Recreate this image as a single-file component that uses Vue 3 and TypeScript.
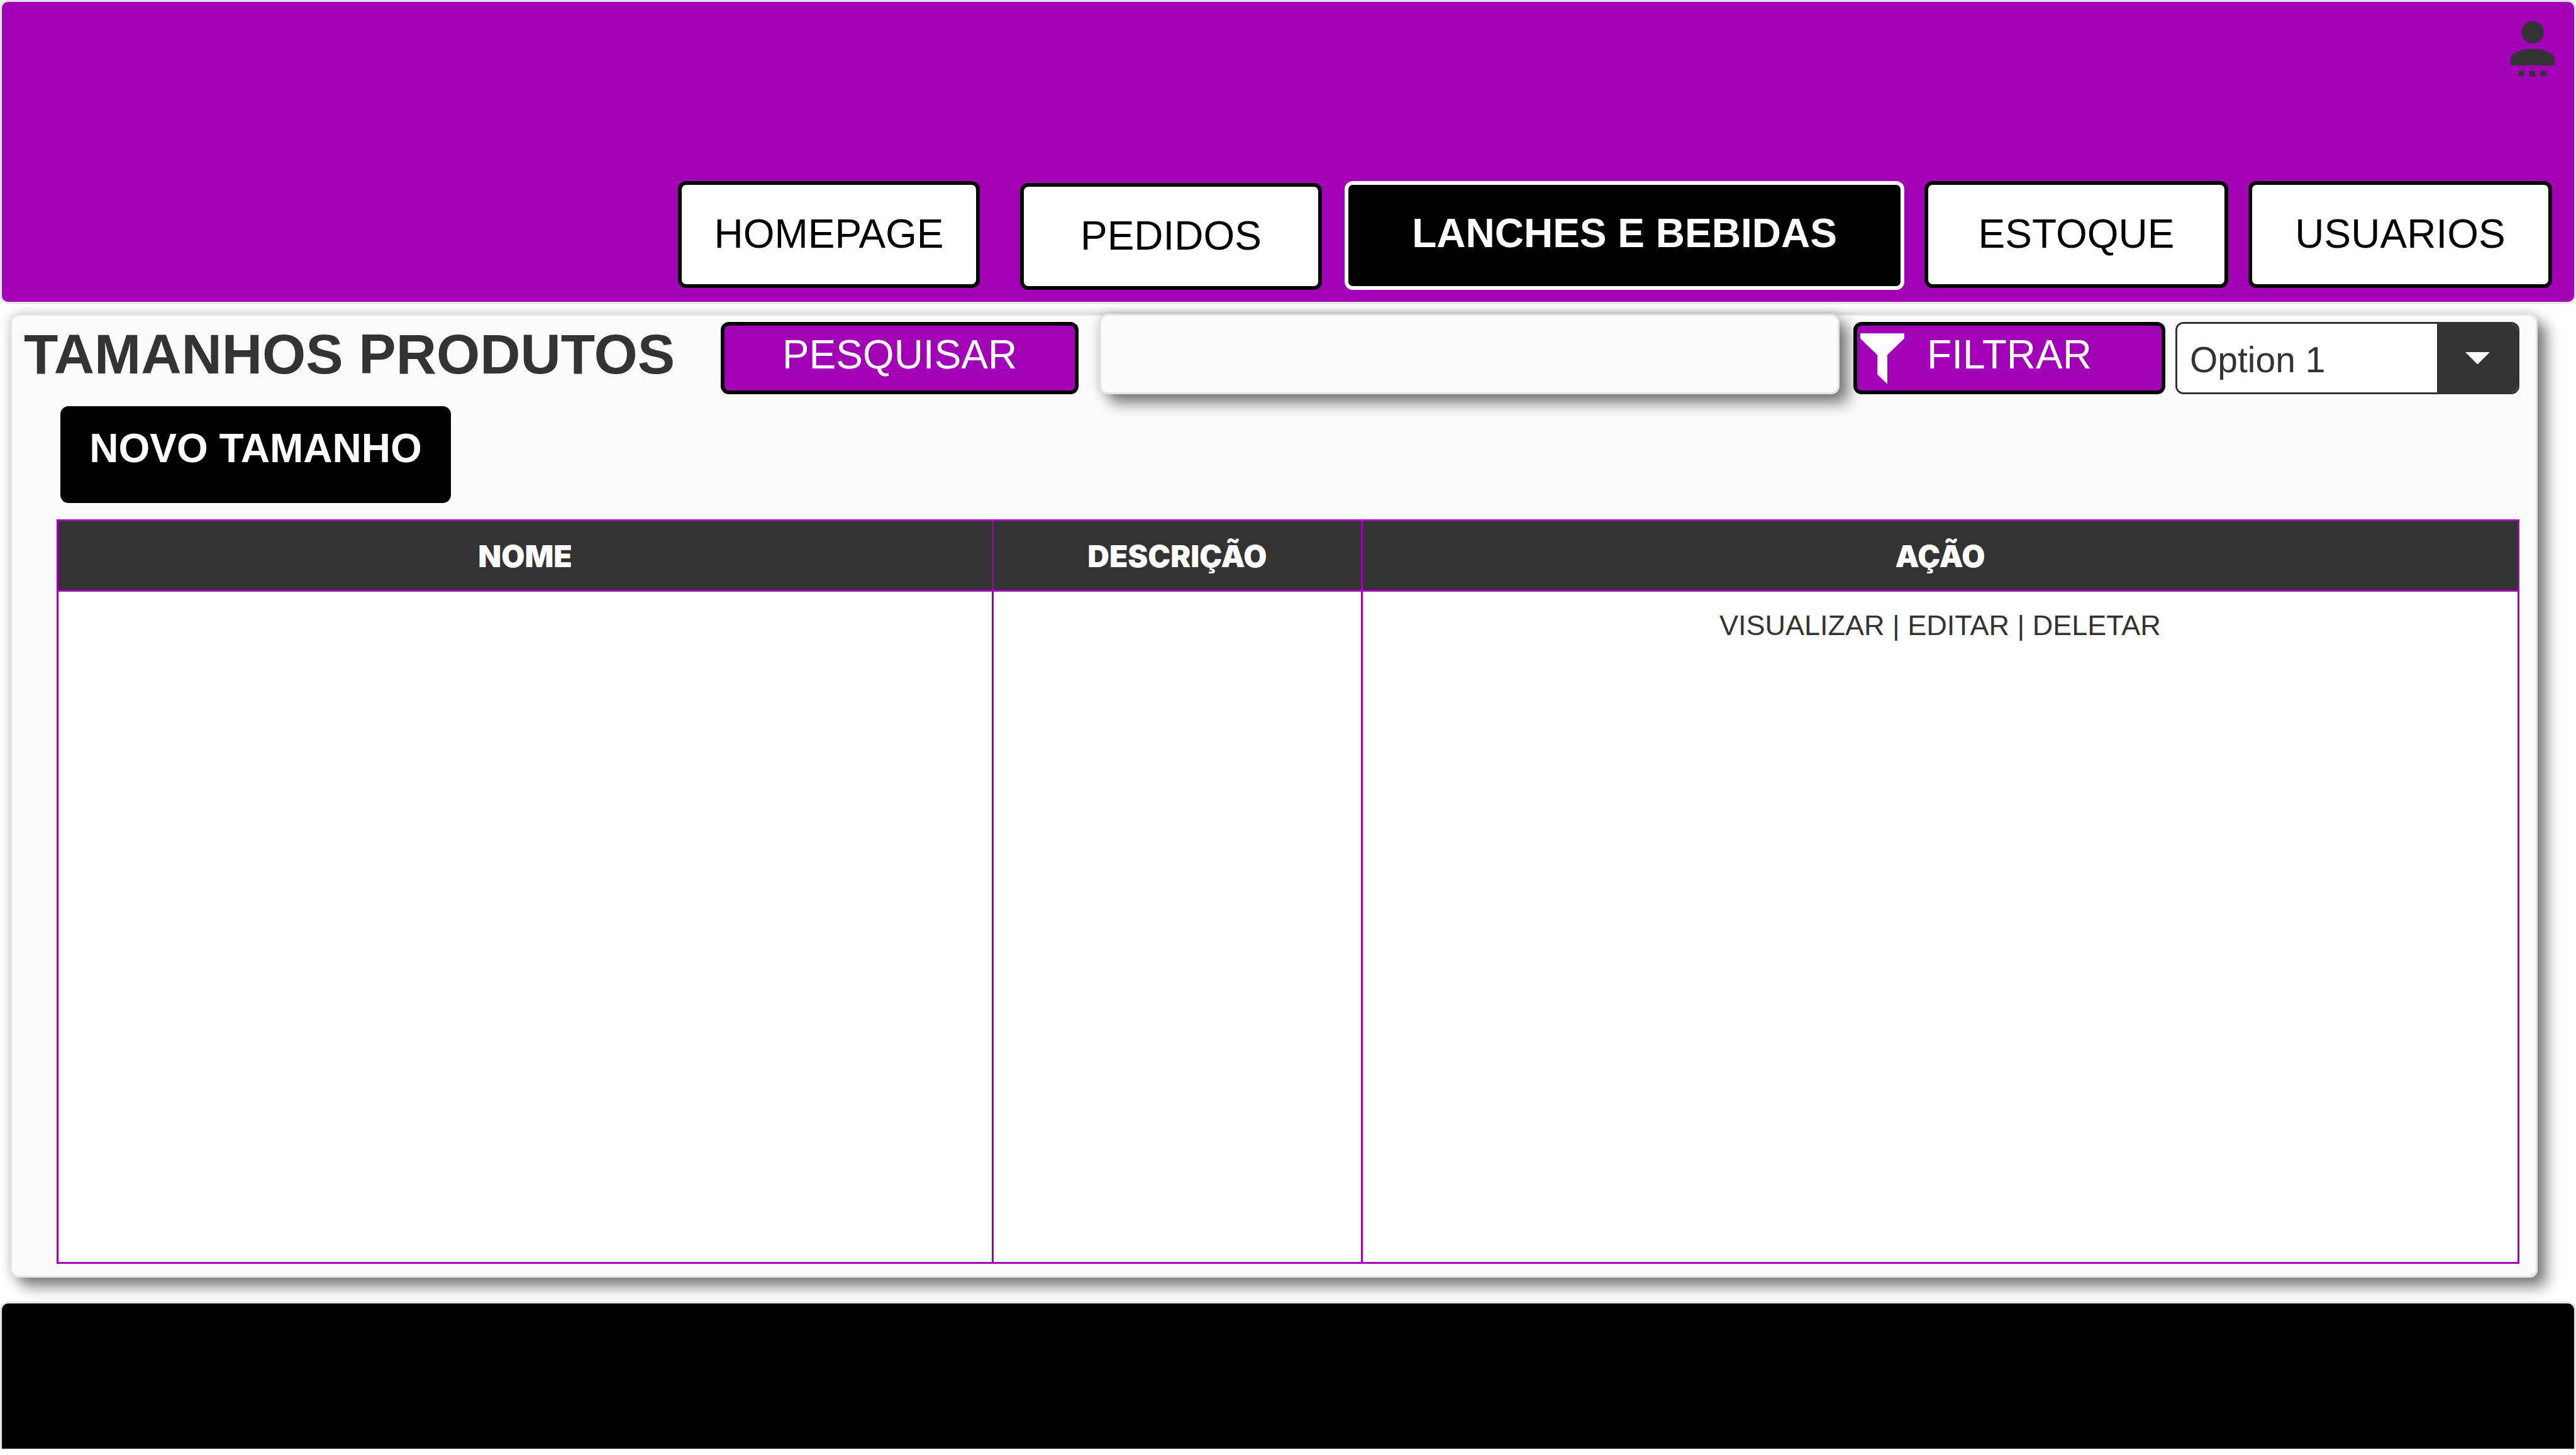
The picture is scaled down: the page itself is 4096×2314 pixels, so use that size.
<script setup lang="ts">
import { ref } from 'vue'

interface NavItem {
  label: string
  kind?: string
}

const navItems: NavItem[] = [
  { label: 'HOMEPAGE' },
  { label: 'PEDIDOS', kind: 'orders' },
  { label: 'LANCHES E BEBIDAS', kind: 'active' },
  { label: 'ESTOQUE', kind: 'wide' },
  { label: 'USUARIOS', kind: 'wide' },
]

const actions: string[] = ['VISUALIZAR', 'EDITAR', 'DELETAR']
const search = ref('')
const filter = ref('Option 1')
</script>

<template>
  <div class="page">
    <header class="header">
      <button class="account" type="button" aria-label="Conta">
        <svg viewBox="0 0 88 112" aria-hidden="true">
          <circle cx="44" cy="22" r="22" />
          <path d="M0 88V78C0 64 20 55 44 55S88 64 88 78V88Z" />
          <path d="M16 99h11v11H16zM38 99h11v11H38zM60 99h11v11H60z" />
        </svg>
      </button>
      <nav class="nav">
        <button
          v-for="item in navItems"
          :key="item.label"
          type="button"
          class="nav-item"
          :class="item.kind"
        >
          {{ item.label }}
        </button>
      </nav>
    </header>

    <main class="panel">
      <div class="toolbar">
        <h1 class="title">TAMANHOS PRODUTOS</h1>
        <button class="tool search-button" type="button">PESQUISAR</button>
        <input v-model="search" class="search" type="text" aria-label="Pesquisar" />
        <button class="tool filter-button" type="button">
          <svg class="funnel" viewBox="0 0 88 101" aria-hidden="true">
            <path d="M0 0H88V10L54 43V101L34 82V43L0 10Z" />
          </svg>
          FILTRAR
        </button>
        <div class="select-box">
          <select v-model="filter" class="select" aria-label="Filtro">
            <option>Option 1</option>
          </select>
          <span class="arrow" aria-hidden="true">
            <svg viewBox="0 0 48 24"><path d="M0 0H48L24 24Z" /></svg>
          </span>
        </div>
      </div>

      <button class="new-button" type="button">NOVO TAMANHO</button>

      <table class="table">
        <thead>
          <tr>
            <th class="col-name" scope="col">NOME</th>
            <th class="col-description" scope="col">DESCRIÇÃO</th>
            <th scope="col">AÇÃO</th>
          </tr>
        </thead>
        <tbody>
          <tr>
            <td></td>
            <td></td>
            <td>
              <template v-for="(action, i) in actions" :key="action">
                <template v-if="i > 0">{{ ' | ' }}</template>
                <a href="#">{{ action }}</a>
              </template>
            </td>
          </tr>
        </tbody>
      </table>
    </main>

    <footer class="footer"></footer>
  </div>
</template>

<style>
body {
  margin: 0;
  background: #fff;
}
</style>

<style scoped>
.page {
  box-sizing: border-box;
  min-height: 100vh;
  padding-bottom: 10px;
  display: flex;
  flex-direction: column;
  font-family: 'Liberation Sans', Arial, sans-serif;
  color: #333;
}

.page * {
  box-sizing: border-box;
}

button,
input,
select {
  margin: 0;
  font-family: inherit;
}

.header {
  display: flex;
  flex-direction: column;
  justify-content: space-between;
  align-items: flex-end;
  height: 483px;
  padding: 31px 35px 19px 0;
  border: 3px solid #e4e4e4;
  border-radius: 13px;
  background: #a100b7;
}

.account {
  width: 70px;
  height: 90px;
  margin-right: -4px;
  padding: 0;
  border: 0;
  background: none;
}

.account svg {
  display: block;
  width: 100%;
  fill: #333;
}

.nav {
  display: flex;
  align-items: flex-start;
  gap: 32px;
}

.nav-item {
  width: 480px;
  height: 170px;
  padding: 0 0 2px;
  border: 6px solid #000;
  border-radius: 13px;
  background: #fff;
  color: #000;
  font-size: 64px;
  white-space: nowrap;
}

.nav-item.orders {
  align-self: flex-end;
  margin: 0 4px 0 32px;
}

.nav-item.active {
  width: 890px;
  height: 173px;
  padding-bottom: 8px;
  border-color: #fff;
  background: #000;
  color: #fff;
  font-weight: 700;
}

.nav-item.wide {
  width: 483px;
}

.panel {
  flex: 1;
  margin: 16px 61px 38px 16px;
  padding-bottom: 22px;
  border-radius: 13px;
  background: #fbfbfb;
  box-shadow:
    inset 0 0 0 3px #e4e4e4,
    15px 15px 22px rgba(0, 0, 0, 0.47),
    0 0 18px rgba(0, 0, 0, 0.2);
}

.toolbar {
  display: flex;
  align-items: flex-end;
  height: 128px;
  padding: 0 29px 0 22px;
}

.title {
  width: 1108px;
  margin: 0;
  font-size: 89px;
  line-height: 128px;
  white-space: nowrap;
}

.tool {
  height: 115px;
  padding: 0 0 12px;
  border: 6px solid #000;
  border-radius: 13px;
  background: #a100b7;
  color: #fff;
  font-size: 64px;
}

.search-button {
  width: 569px;
}

.search {
  flex: 1;
  min-width: 0;
  height: 128px;
  margin: 0 22px 0 33px;
  padding: 0 24px;
  border: 3px solid #e4e4e4;
  border-radius: 13px;
  background: #fbfbfb;
  box-shadow:
    15px 15px 22px rgba(0, 0, 0, 0.47),
    0 0 18px rgba(0, 0, 0, 0.2);
  color: #333;
  font-size: 57px;
}

.filter-button {
  position: relative;
  width: 496px;
}

.funnel {
  position: absolute;
  top: 12px;
  left: 5px;
  width: 70px;
  height: 81px;
  fill: #fff;
}

.select-box {
  display: flex;
  width: 547px;
  height: 115px;
  margin-left: 16px;
  overflow: hidden;
  border: 3px solid #333;
  border-radius: 13px;
  background: #fff;
}

.select {
  flex: 1;
  min-width: 0;
  padding: 4px 0 0 20px;
  border: 0;
  appearance: none;
  background: #fff;
  color: #333;
  font-size: 57px;
}

.arrow {
  display: flex;
  align-items: center;
  justify-content: center;
  width: 128px;
  background: #333;
}

.arrow svg {
  width: 39px;
  fill: #fff;
}

.new-button {
  display: block;
  width: 621px;
  height: 154px;
  margin: 19px 0 26px 80px;
  padding: 0 0 20px;
  border: 0;
  border-radius: 13px;
  background: #000;
  color: #fff;
  font-size: 64px;
  font-weight: 700;
}

.table {
  width: calc(100% - 103px);
  height: calc(100vh - 1130px);
  margin-left: 74px;
  border-collapse: collapse;
  table-layout: fixed;
  background: #fff;
}

.col-name {
  width: 38%;
}

.col-description {
  width: 15%;
}

th,
td {
  border: 3px solid #a100b7;
  text-align: center;
}

th {
  height: 112px;
  padding: 2px 0 0;
  background: #333;
  color: #fff;
  font-family: Inter, 'Liberation Sans', sans-serif;
  font-size: 48px;
  font-weight: 900;
}

td {
  padding: 24px 0 0;
  vertical-align: top;
  font-size: 45px;
  line-height: 60px;
}

td a {
  color: inherit;
  text-decoration: none;
}

.footer {
  height: 234px;
  border: 3px solid #e4e4e4;
  border-bottom: 0;
  border-radius: 13px 13px 0 0;
  background: #000;
}
</style>
